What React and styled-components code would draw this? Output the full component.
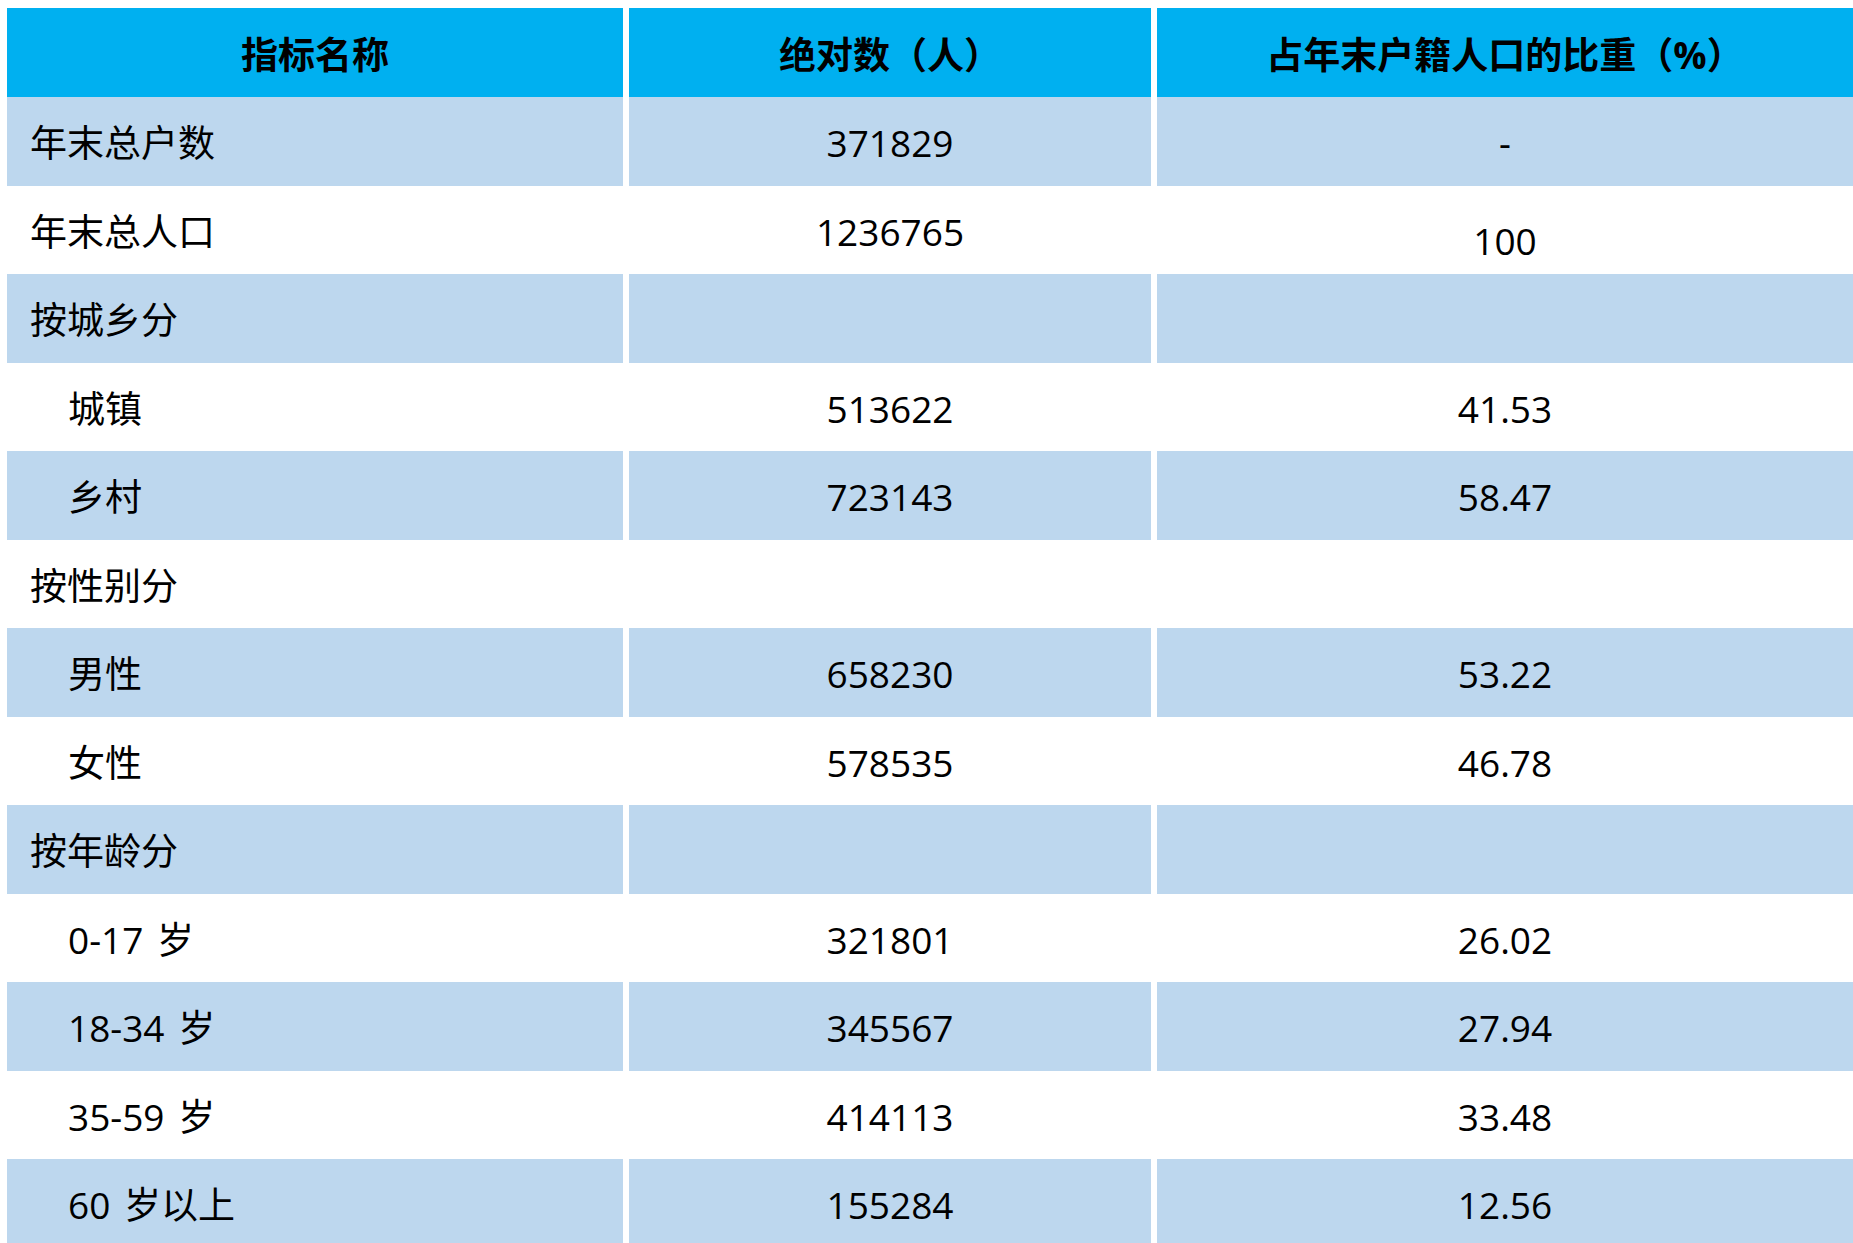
import React from "react";
import styled, { createGlobalStyle } from "styled-components";

const GlobalStyle = createGlobalStyle`
  html, body {
    margin: 0;
    padding: 0;
    background: #ffffff;
    overflow: hidden;
  }
  body {
    font-family: "Open Sans", "Noto Sans CJK SC", sans-serif;
    color: #000000;
  }
`;

const Sheet = styled.div`
  padding: 8px 0 0 7px;
  width: 1846px;
`;

const Row = styled.div`
  display: grid;
  grid-template-columns: 616px 522px 696px;
  column-gap: 6px;
  height: ${(p) => (p.$head ? "89px" : "88.5px")};
`;

const Cell = styled.div`
  display: flex;
  align-items: center;
  justify-content: ${(p) => (p.$left ? "flex-start" : "center")};
  box-sizing: border-box;
  padding-left: ${(p) => (p.$left ? (p.$indent ? "61px" : "23px") : "0")};
  padding-top: ${(p) => (p.$low ? "22px" : "3px")};
  background: ${(p) =>
    p.$head ? "#00b0f0" : p.$shade ? "#bdd7ee" : "#ffffff"};
  font-size: 37px;
  font-weight: ${(p) => (p.$head ? 700 : 400)};
  line-height: 1;
  word-spacing: ${(p) => (p.$left ? "4px" : "0")};
  white-space: nowrap;
`;

const rows = [
  { name: "年末总户数", num: "371829", pct: "-" },
  { name: "年末总人口", num: "1236765", pct: "100", low: true },
  { name: "按城乡分", num: "", pct: "" },
  { name: "城镇", num: "513622", pct: "41.53", indent: true },
  { name: "乡村", num: "723143", pct: "58.47", indent: true },
  { name: "按性别分", num: "", pct: "" },
  { name: "男性", num: "658230", pct: "53.22", indent: true },
  { name: "女性", num: "578535", pct: "46.78", indent: true },
  { name: "按年龄分", num: "", pct: "" },
  { name: "0-17 岁", num: "321801", pct: "26.02", indent: true },
  { name: "18-34 岁", num: "345567", pct: "27.94", indent: true },
  { name: "35-59 岁", num: "414113", pct: "33.48", indent: true },
  { name: "60 岁以上", num: "155284", pct: "12.56", indent: true },
];

export default function App() {
  return (
    <>
      <GlobalStyle />
      <Sheet>
        <Row $head>
          <Cell $head>指标名称</Cell>
          <Cell $head>绝对数（人）</Cell>
          <Cell $head>占年末户籍人口的比重（%）</Cell>
        </Row>
        {rows.map((r, i) => {
          const shade = i % 2 === 0;
          return (
            <Row key={r.name}>
              <Cell $left $indent={r.indent} $shade={shade}>
                {r.name}
              </Cell>
              <Cell $shade={shade}>{r.num}</Cell>
              <Cell $shade={shade} $low={r.low}>
                {r.pct}
              </Cell>
            </Row>
          );
        })}
      </Sheet>
    </>
  );
}
